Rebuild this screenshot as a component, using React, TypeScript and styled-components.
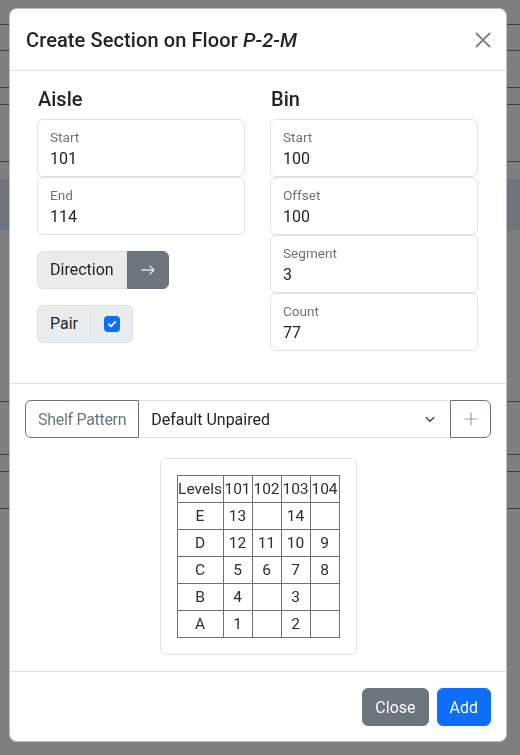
import React from "react";
import styled, { createGlobalStyle } from "styled-components";

const Global = createGlobalStyle`
  html, body { margin: 0; padding: 0; }
  body {
    font-family: Roboto, "Noto Sans", sans-serif;
    color: #212529;
    background: #fff;
    width: 520px;
    height: 755px;
    overflow: hidden;
  }
  * { box-sizing: border-box; }
`;

/* ---------- page behind the backdrop ---------- */
const Behind = styled.div`
  display: flex;
  flex-direction: column;
  width: 520px;
  height: 755px;
`;
const BehindRow = styled.div<{ $h: number; $tint?: boolean; $line?: boolean }>`
  height: ${(p) => p.$h}px;
  flex: none;
  background: ${(p) => (p.$tint ? "#dde9fd" : "#fff")};
  border-bottom: ${(p) => (p.$line ? "1px solid #7a7a7a" : "none")};
`;

const Backdrop = styled.div`
  position: fixed;
  inset: 0;
  background: rgba(0, 0, 0, 0.5);
`;

/* ---------- modal ---------- */
const Modal = styled.div`
  position: fixed;
  top: 8px;
  left: 9px;
  width: 498px;
  height: 734px;
  background: #fff;
  border: 1px solid rgba(0, 0, 0, 0.25);
  border-radius: 8px;
  display: flex;
  flex-direction: column;
  overflow: hidden;
`;

const Header = styled.div`
  display: flex;
  align-items: center;
  justify-content: space-between;
  padding: 16px 15px 15px 16px;
  border-bottom: 1px solid #dee2e6;
`;
const Title = styled.h5`
  margin: 0;
  font-size: 20px;
  font-weight: 500;
  line-height: 30px;
  letter-spacing: 0.1px;
  em { font-style: italic; }
`;
const CloseX = styled.button`
  width: 16px;
  height: 16px;
  padding: 0;
  border: 0;
  background: transparent;
  display: flex;
  cursor: pointer;
`;

const TopBody = styled.div`
  display: grid;
  grid-template-columns: 1fr 1fr;
  column-gap: 25px;
  padding: 16px 28px 32px 27px;
  border-bottom: 1px solid #dee2e6;
`;
const Col = styled.div`
  display: flex;
  flex-direction: column;
`;
const SectionTitle = styled.h5`
  margin: 0 0 8px 1px;
  font-size: 20px;
  font-weight: 500;
  line-height: 24px;
`;
const Floating = styled.div`
  height: 58px;
  border: 1px solid #dee2e6;
  border-radius: 6px;
  padding: 7px 12px 0 12px;
  display: flex;
  flex-direction: column;
`;
const FloatLabel = styled.label`
  font-size: 13.6px;
  line-height: 20px;
  color: rgba(33, 37, 41, 0.65);
`;
const FloatValue = styled.div`
  font-size: 16px;
  line-height: 24px;
  color: #212529;
`;

const Group = styled.div<{ $mt: number }>`
  display: flex;
  align-self: flex-start;
  height: 38px;
  margin-top: ${(p) => p.$mt}px;
`;
const GroupText = styled.span`
  display: flex;
  align-items: center;
  padding: 0 12px;
  font-size: 16px;
  line-height: 24px;
  background: #e9ecef;
  border: 1px solid #dee2e6;
  border-radius: 6px 0 0 6px;
  color: #212529;
`;
const ArrowBtn = styled.button`
  width: 42px;
  height: 38px;
  border: 1px solid #6c757d;
  background: #6c757d;
  border-radius: 0 6px 6px 0;
  display: flex;
  align-items: center;
  justify-content: center;
  padding: 0;
`;
const CheckCell = styled.span`
  width: 42px;
  display: flex;
  align-items: center;
  justify-content: center;
  background: #e9ecef;
  border: 1px solid #dee2e6;
  border-left: 0;
  border-radius: 0 6px 6px 0;
`;
const CheckBox = styled.span`
  width: 16px;
  height: 16px;
  border-radius: 4px;
  background: #0d6efd;
  display: flex;
  align-items: center;
  justify-content: center;
`;

const LowerBody = styled.div`
  flex: 1;
  display: flex;
  flex-direction: column;
  align-items: center;
  padding: 16px 15px;
  border-bottom: 1px solid #dee2e6;
`;
const PatternGroup = styled.div`
  display: flex;
  width: 100%;
  height: 38px;
`;
const PatternLabel = styled.span`
  display: flex;
  align-items: center;
  padding: 0 12px;
  font-size: 16px;
  letter-spacing: -0.3px;
  color: #6c757d;
  border: 1px solid #6c757d;
  border-radius: 6px 0 0 6px;
`;
const Select = styled.div`
  flex: 1;
  display: flex;
  align-items: center;
  justify-content: space-between;
  padding: 0 12px;
  font-size: 16px;
  color: #212529;
  border-top: 1px solid #dee2e6;
  border-bottom: 1px solid #dee2e6;
`;
const PlusBtn = styled.button`
  width: 41px;
  height: 38px;
  padding: 0;
  border: 1px solid #6c757d;
  border-radius: 0 6px 6px 0;
  background: #fff;
  display: flex;
  align-items: center;
  justify-content: center;
`;

const TableCard = styled.div`
  margin-top: 20px;
  padding: 16px;
  border: 1px solid #dee2e6;
  border-radius: 6px;
`;
const Grid = styled.table`
  border-collapse: collapse;
  font-size: 15.5px;
  color: #2b2f33;
`;
const Cell = styled.td<{ $w: number }>`
  border: 1px solid #707070;
  width: ${(p) => p.$w}px;
  height: 27px;
  padding: 0;
  text-align: center;
  line-height: 25px;
  white-space: nowrap;
`;

const Footer = styled.div`
  display: flex;
  justify-content: flex-end;
  gap: 8px;
  padding: 16px 15px 15px 15px;
`;
const Btn = styled.button<{ $variant: "secondary" | "primary" }>`
  height: 38px;
  padding: 0 12px;
  border-radius: 6px;
  font-family: inherit;
  font-size: 16px;
  color: #fff;
  border: 1px solid ${(p) => (p.$variant === "primary" ? "#0d6efd" : "#6c757d")};
  background: ${(p) => (p.$variant === "primary" ? "#0d6efd" : "#6c757d")};
`;

const behindRows = [
  { h: 25, line: true },
  { h: 26, line: true },
  { h: 37, line: true },
  { h: 17, line: true },
  { h: 57, line: true },
  { h: 17 },
  { h: 51, tint: true },
  { h: 172, line: true },
  { h: 53, line: true },
  { h: 17, line: true },
  { h: 37, line: true },
];

const levels: [string, string, string, string, string][] = [
  ["E", "13", "", "14", ""],
  ["D", "12", "11", "10", "9"],
  ["C", "5", "6", "7", "8"],
  ["B", "4", "", "3", ""],
  ["A", "1", "", "2", ""],
];
const widths = [46, 29, 29, 29, 29];

const Field = ({ label, value }: { label: string; value: string }) => (
  <Floating>
    <FloatLabel>{label}</FloatLabel>
    <FloatValue>{value}</FloatValue>
  </Floating>
);

export default function App() {
  return (
    <>
      <Global />
      <Behind>
        {behindRows.map((r, i) => (
          <BehindRow key={i} $h={r.h} $tint={r.tint} $line={r.line} />
        ))}
      </Behind>
      <Backdrop />
      <Modal>
        <Header>
          <Title>
            Create Section on Floor <em>P-2-M</em>
          </Title>
          <CloseX aria-label="Close">
            <svg width="16" height="16" viewBox="0 0 16 16">
              <path d="M1 1L15 15M15 1L1 15" stroke="#808080" strokeWidth="1.8" fill="none" />
            </svg>
          </CloseX>
        </Header>
        <TopBody>
          <Col>
            <SectionTitle>Aisle</SectionTitle>
            <Field label="Start" value="101" />
            <Field label="End" value="114" />
            <Group $mt={16}>
              <GroupText>Direction</GroupText>
              <ArrowBtn>
                <svg width="16" height="16" viewBox="0 0 16 16">
                  <path d="M1.5 8H14M9.5 3.5L14 8L9.5 12.5" stroke="#dfe2e5" strokeWidth="1.3" fill="none" />
                </svg>
              </ArrowBtn>
            </Group>
            <Group $mt={16}>
              <GroupText>Pair</GroupText>
              <CheckCell>
                <CheckBox>
                  <svg width="10" height="10" viewBox="0 0 10 10">
                    <path d="M1.8 5.2L4 7.3L8.3 2.8" stroke="#fff" strokeWidth="1.8" fill="none" strokeLinecap="round" strokeLinejoin="round" />
                  </svg>
                </CheckBox>
              </CheckCell>
            </Group>
          </Col>
          <Col>
            <SectionTitle>Bin</SectionTitle>
            <Field label="Start" value="100" />
            <Field label="Offset" value="100" />
            <Field label="Segment" value="3" />
            <Field label="Count" value="77" />
          </Col>
        </TopBody>
        <LowerBody>
          <PatternGroup>
            <PatternLabel>Shelf Pattern</PatternLabel>
            <Select>
              <span>Default Unpaired</span>
              <svg width="16" height="12" viewBox="0 0 16 16">
                <path d="M3 6L8 11L13 6" stroke="#343a40" strokeWidth="1.6" fill="none" strokeLinecap="round" strokeLinejoin="round" />
              </svg>
            </Select>
            <PlusBtn aria-label="Add pattern">
              <svg width="14" height="14" viewBox="0 0 14 14">
                <path d="M7 0.5V13.5M0.5 7H13.5" stroke="#9aa0a6" strokeWidth="1.2" fill="none" />
              </svg>
            </PlusBtn>
          </PatternGroup>
          <TableCard>
            <Grid>
              <tbody>
                <tr>
                  {["Levels", "101", "102", "103", "104"].map((h, i) => (
                    <Cell key={h} $w={widths[i]}>{h}</Cell>
                  ))}
                </tr>
                {levels.map((row) => (
                  <tr key={row[0]}>
                    {row.map((c, i) => (
                      <Cell key={i} $w={widths[i]}>{c}</Cell>
                    ))}
                  </tr>
                ))}
              </tbody>
            </Grid>
          </TableCard>
        </LowerBody>
        <Footer>
          <Btn $variant="secondary">Close</Btn>
          <Btn $variant="primary">Add</Btn>
        </Footer>
      </Modal>
    </>
  );
}
